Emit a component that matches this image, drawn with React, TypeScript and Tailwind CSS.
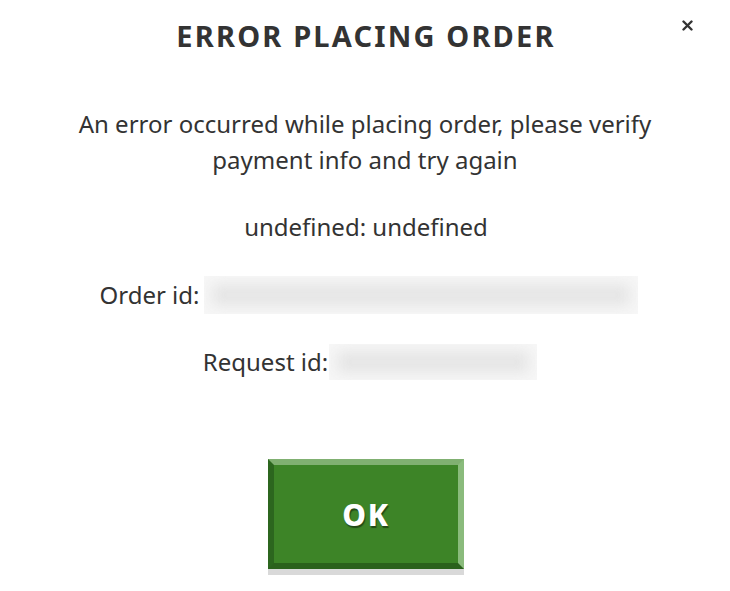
import React from "react";

export default function App() {
  return (
    <div
      className="w-[730px] h-[591px] bg-white relative text-[#333333]"
      style={{ fontFamily: '"Noto Sans", "Open Sans", sans-serif' }}
    >
      <button className="absolute right-[36px] top-[16px] w-[14px] h-[18px] flex items-center justify-center text-[#333]">
        <svg width="11" height="11" viewBox="0 0 11 11">
          <path d="M1.5 1.5 L9.5 9.5 M9.5 1.5 L1.5 9.5" stroke="#333" strokeWidth="2.4" strokeLinecap="round" />
        </svg>
      </button>
      <div className="flex flex-col items-center pt-[14px]">
        <h1 className="text-[29px] leading-[44px] font-bold tracking-[0.075em] text-[#333] pl-[2px]">
          ERROR PLACING ORDER
        </h1>
        <p className="mt-[48px] text-[24px] leading-[36px] text-center w-[600px]">
          An error occurred while placing order, please verify payment info and try again
        </p>
        <p className="mt-[31px] text-[24px] leading-[36px] pl-[2px]">undefined: undefined</p>
        <div className="mt-[31px] flex items-center text-[24px] leading-[36px] pl-[7px]">
          <span>Order id:</span>
          <span className="ml-[4px] w-[434px] h-[38px] bg-[#f7f7f7] flex items-center px-[8px] overflow-hidden">
            <span className="block w-full h-[22px] bg-[#e5e5e5] blur-[7px]" />
          </span>
        </div>
        <div className="mt-[30px] flex items-center text-[24px] leading-[36px] pl-[10px]">
          <span>Request id:</span>
          <span className="ml-[1px] w-[208px] h-[36px] bg-[#f7f7f7] flex items-center px-[8px] overflow-hidden">
            <span className="block w-full h-[22px] bg-[#e5e5e5] blur-[7px]" />
          </span>
        </div>
        <div className="mt-[79px] flex flex-col pl-[2px]">
          <button
            className="w-[196px] h-[110px] bg-[#3d8427] border-t-[6px] border-t-[#80b071] border-l-[6px] border-l-[#2c661e] border-r-[6px] border-r-[#8abb7c] border-b-[6px] border-b-[#2b611c] text-white text-[30px] font-extrabold tracking-[0.06em] flex items-center justify-center"
            style={{ textShadow: "1px 2px 1px rgba(0,0,0,0.45)" }}
          >
            OK
          </button>
          <div className="h-[6px] w-[196px] bg-[#d9d9d9]" />
        </div>
      </div>
    </div>
  );
}
